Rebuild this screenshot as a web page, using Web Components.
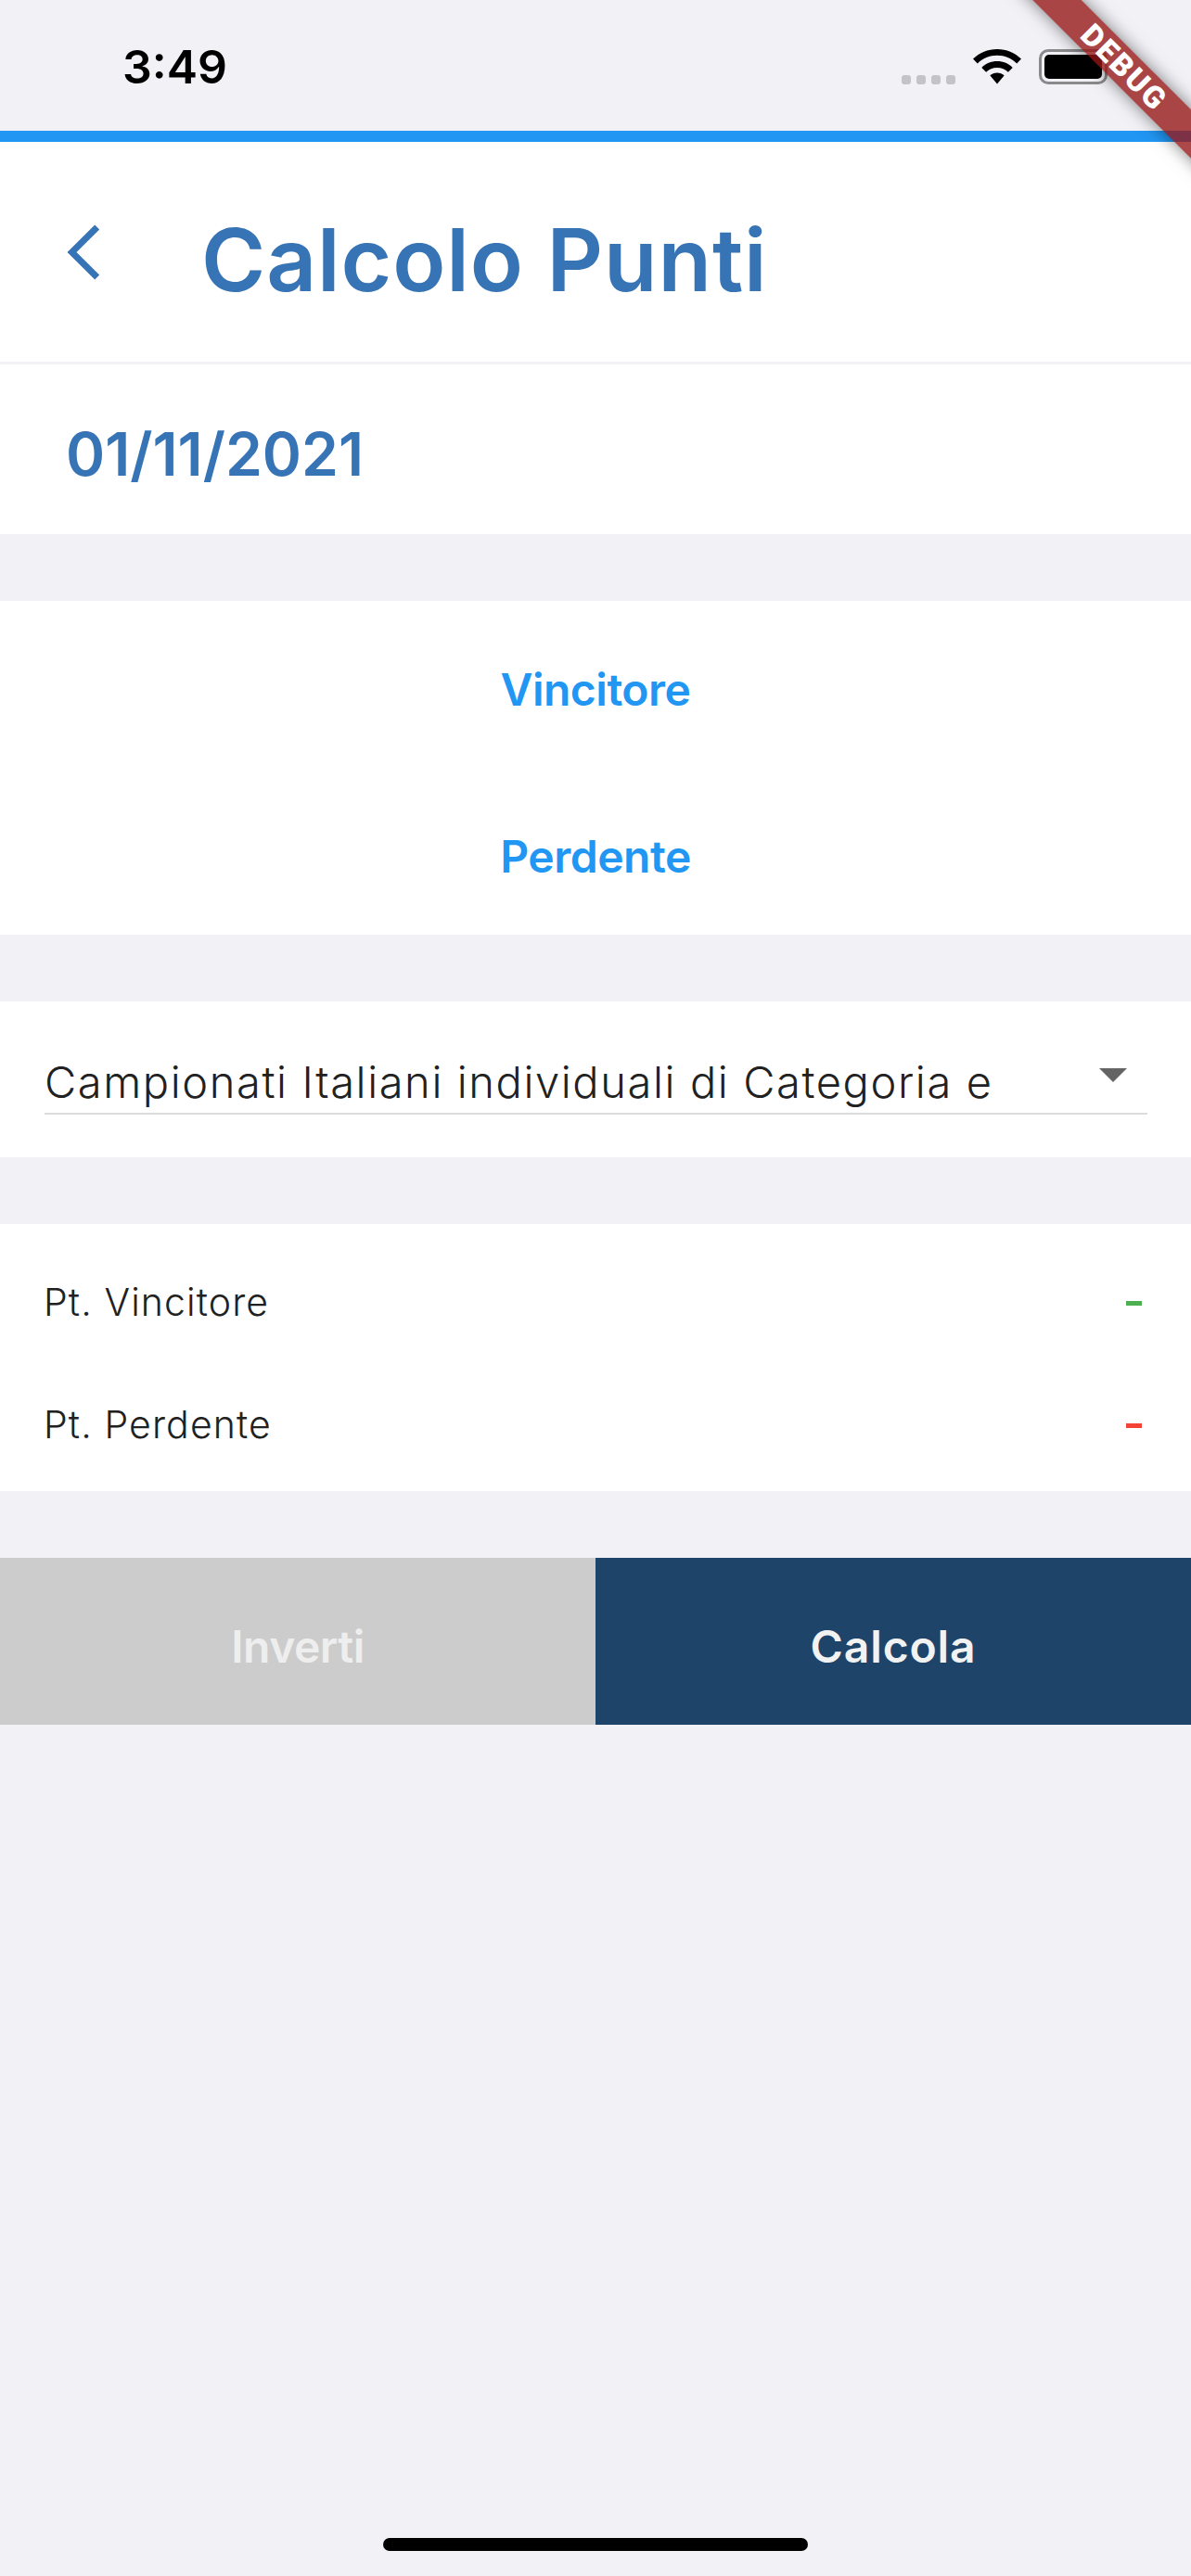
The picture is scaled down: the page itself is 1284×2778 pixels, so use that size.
<!DOCTYPE html>
<html lang="it">
<head>
<meta charset="utf-8">
<title>Calcolo Punti</title>
<style>
  html, body { margin: 0; padding: 0; }
  body {
    width: 1284px;
    height: 2778px;
    overflow: hidden;
    background: #f2f1f6;
    font-family: Inter, "Noto Sans", sans-serif;
  }
</style>
</head>
<body>
<app-screen>
  <status-bar time="3:49"></status-bar>
  <app-header>Calcolo Punti</app-header>
  <date-row>01/11/2021</date-row>
  <white-card>
    <pick-row>Vincitore</pick-row>
    <pick-row>Perdente</pick-row>
  </white-card>
  <white-card>
    <drop-down>Campionati Italiani individuali di Categoria e</drop-down>
  </white-card>
  <white-card>
    <score-row color="#4caf50" first>Pt. Vincitore</score-row>
    <score-row color="#f44336">Pt. Perdente</score-row>
  </white-card>
  <action-bar>
    <action-button disabled>Inverti</action-button>
    <action-button wide>Calcola</action-button>
  </action-bar>
  <home-bar></home-bar>
</app-screen>
<debug-banner></debug-banner>

<script>
class AppScreen extends HTMLElement {
    constructor() {
        super();
        this.attachShadow({mode: "open"}).innerHTML = `
            <style>
                :host { display: flex; flex-direction: column; height: 2778px; }
                ::slotted(white-card), ::slotted(action-bar) { margin-top: 72px; }
            </style>
            <slot></slot>`;
    }
}

class StatusBar extends HTMLElement {
    constructor() {
        super();
        this.attachShadow({mode: "open"}).innerHTML = `
            <style>
                :host { display: block; height: 153px; box-sizing: border-box; border-bottom: 12px solid #2196f3; }
                .bar { display: flex; align-items: flex-start; height: 141px; }
                .time {
                    margin: 43px 0 0 132px;
                    font-size: 50px; line-height: 58px; font-weight: 600; color: #000;
                }
                .icons { display: flex; align-items: flex-start; margin-left: auto; margin-right: 90px; padding-top: 53px; }
                .dots { display: flex; gap: 6px; margin: 28px 19px 0 0; }
                .dots i { width: 10px; height: 10px; border-radius: 3px; background: #c4c3c9; }
                .wifi { display: block; margin-right: 19px; }
                .battery {
                    width: 74px; height: 38px; box-sizing: border-box;
                    border: 3px solid #8a8a8d; border-radius: 10px; padding: 3px;
                }
                .battery b { display: block; height: 100%; background: #000; border-radius: 5px; }
            </style>
            <div class="bar">
                <span class="time">${this.getAttribute("time")}</span>
                <div class="icons">
                    <div class="dots"><i></i><i></i><i></i><i></i></div>
                    <svg class="wifi" width="52" height="38" viewBox="0 0 52 38">
                        <path fill="#000" d="M26 0C16 0 7 3.900 0 10.500L4.800 15.400C10.400 10 17.800 6.800 26 6.800S41.600 10 47.200 15.400L52 10.500C45 3.900 36 0 26 0Z"/>
                        <path fill="#000" d="M26 13C19.500 13 13.500 15.500 9.300 19.900L14.100 24.800C17.200 21.800 21.300 19.900 26 19.900S34.800 21.800 37.900 24.800L42.700 19.900C38.500 15.500 32.500 13 26 13Z"/>
                        <path fill="#000" d="M26 25.500C23 25.500 20.300 26.700 18.400 28.600L26 37.500L33.600 28.600C31.700 26.700 29 25.500 26 25.500Z"/>
                    </svg>
                    <div class="battery"><b></b></div>
                </div>
            </div>`;
    }
}

class AppHeader extends HTMLElement {
    constructor() {
        super();
        this.attachShadow({mode: "open"}).innerHTML = `
            <style>
                :host {
                    display: flex; align-items: flex-start; height: 240px; box-sizing: border-box;
                    background: #fff; border-bottom: 3px solid #f2f1f6; color: #3674b5;
                }
                svg { display: block; margin: 88px 0 0 70px; }
                .title {
                    margin: 60px 0 0 107px;
                    font-size: 94px; line-height: 134px; font-weight: 600;
                    letter-spacing: .9px;
                }
            </style>
            <svg width="40" height="62" viewBox="0 0 40 62">
                <path d="M34.700 4L7.500 31L34.700 58" fill="none" stroke="#3674b5" stroke-width="7"/>
            </svg>
            <div class="title"><slot></slot></div>`;
    }
}

class DateRow extends HTMLElement {
    constructor() {
        super();
        this.attachShadow({mode: "open"}).innerHTML = `
            <style>
                :host {
                    display: flex; align-items: center; height: 183px; box-sizing: border-box;
                    padding: 10px 0 0 71px;
                    background: #fff; color: #3674b5;
                    font-size: 64px; font-weight: 600;
                }
            </style>
            <slot></slot>`;
    }
}

class WhiteCard extends HTMLElement {
    constructor() {
        super();
        this.attachShadow({mode: "open"}).innerHTML = `
            <style>:host { display: block; background: #fff; }</style>
            <slot></slot>`;
    }
}

class PickRow extends HTMLElement {
    constructor() {
        super();
        this.attachShadow({mode: "open"}).innerHTML = `
            <style>
                :host {
                    display: flex; align-items: center; justify-content: center;
                    height: 180px; box-sizing: border-box; padding-top: 10px;
                    color: #2196f3; font-size: 48px; font-weight: 600; letter-spacing: -.5px;
                }
            </style>
            <slot></slot>`;
    }
}

class DropDown extends HTMLElement {
    constructor() {
        super();
        this.attachShadow({mode: "open"}).innerHTML = `
            <style>
                :host { display: block; padding: 48px 47px 46px 48px; }
                .field {
                    display: flex; align-items: center; justify-content: space-between;
                    height: 72px; border-bottom: 2px solid #dcdcdc;
                    color: #212121; font-size: 47px; font-weight: 300; letter-spacing: 1.6px;
                }
                span { padding-top: 4px; }
                svg { display: block; margin: -10px 22px 0 0; }
            </style>
            <div class="field">
                <span><slot></slot></span>
                <svg width="30" height="15" viewBox="0 0 30 15"><path fill="#646464" d="M0 0H30L15 15Z"/></svg>
            </div>`;
    }
}

class ScoreRow extends HTMLElement {
    constructor() {
        super();
        const color = this.getAttribute("color");
        this.attachShadow({mode: "open"}).innerHTML = `
            <style>
                :host {
                    display: flex; align-items: center; justify-content: space-between;
                    height: 144px; box-sizing: border-box; padding: 0 53px 0 47px;
                    color: #212121; font-size: 41px; font-weight: 300; letter-spacing: 1.1px;
                }
                :host([first]) { padding-top: 24px; }
                i { width: 17px; height: 5px; margin-top: 3px; background: ${color}; }
            </style>
            <span><slot></slot></span>
            <i></i>`;
    }
}

class ActionBar extends HTMLElement {
    constructor() {
        super();
        this.attachShadow({mode: "open"}).innerHTML = `
            <style>:host { display: grid; grid-template-columns: 1fr 1fr; height: 180px; }</style>
            <slot></slot>`;
    }
}

class ActionButton extends HTMLElement {
    constructor() {
        super();
        this.attachShadow({mode: "open"}).innerHTML = `
            <style>
                :host {
                    display: flex; align-items: center; justify-content: center;
                    box-sizing: border-box; padding-top: 10px;
                    background: #1f4469; color: #f2f2f2;
                    font-size: 48px; font-weight: 600; letter-spacing: -.5px;
                }
                :host([wide]) { letter-spacing: .9px; }
                :host([disabled]) { background: #ccc; color: #eee; }
            </style>
            <slot></slot>`;
    }
}

class HomeBar extends HTMLElement {
    constructor() {
        super();
        this.attachShadow({mode: "open"}).innerHTML = `
            <style>
                :host { display: flex; justify-content: center; margin-top: auto; padding-bottom: 27px; }
                i { width: 458px; height: 14px; border-radius: 7px; background: #000; }
            </style>
            <i></i>`;
    }
}

// flutter debug ribbon, lies over the status bar corner
class DebugBanner extends HTMLElement {
    constructor() {
        super();
        this.attachShadow({mode: "open"}).innerHTML = `
            <style>
                :host {
                    position: absolute; right: 0; top: 0;
                    width: 340px; height: 260px; overflow: hidden;
                }
                .band {
                    position: absolute; left: 68px; top: 54px;
                    width: 400px; height: 37px;
                    display: flex; align-items: center; justify-content: center;
                    transform: rotate(45deg);
                    background: rgba(150, 20, 20, .78);
                    box-shadow: 0 0 18px rgba(0, 0, 0, .5);
                    color: #fff; font-family: Roboto, sans-serif;
                    font-size: 33px; font-weight: 900; line-height: 37px; letter-spacing: 2px;
                }
            </style>
            <div class="band">DEBUG</div>`;
    }
}

window.customElements.define("app-screen", AppScreen);
window.customElements.define("status-bar", StatusBar);
window.customElements.define("app-header", AppHeader);
window.customElements.define("date-row", DateRow);
window.customElements.define("white-card", WhiteCard);
window.customElements.define("pick-row", PickRow);
window.customElements.define("drop-down", DropDown);
window.customElements.define("score-row", ScoreRow);
window.customElements.define("action-bar", ActionBar);
window.customElements.define("action-button", ActionButton);
window.customElements.define("home-bar", HomeBar);
window.customElements.define("debug-banner", DebugBanner);
</script>
</body>
</html>
